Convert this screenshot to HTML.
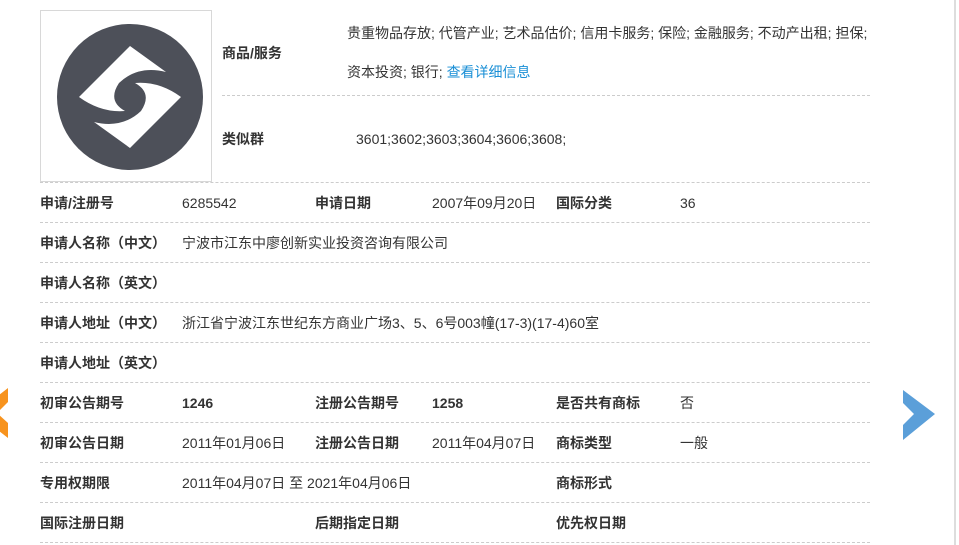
<!DOCTYPE html>
<html><head><meta charset="utf-8"><style>
body{margin:0;width:959px;height:545px;background:#fff;position:relative;overflow:hidden;font-family:"Liberation Sans","Noto Sans CJK SC",sans-serif;font-size:14px;color:#333}
.a{position:absolute;white-space:nowrap;line-height:16px}
.b{font-weight:bold}
.l{position:absolute;left:40px;width:830px;border-top:1px dashed #ccc;height:0}
</style></head><body>
<div style="position:absolute;left:954px;top:0;width:2px;height:545px;background:#ddd"></div>
<div style="position:absolute;left:40px;top:10px;width:170px;height:170px;border:1px solid #d8d8d8"></div>
<svg style="position:absolute;left:41px;top:11px" width="170" height="170" viewBox="0 0 170 170">
<circle cx="89" cy="86" r="73" fill="#4d5059"/>
<path d="M38 86 L89 35 L125 61 Q97 54 78 72 Q66 90 84 100 Q60 102 38 86Z" fill="#fff"/>
<path d="M140 86 L89 137 L53 111 Q81 118 100 100 Q112 82 94 72 Q118 70 140 86Z" fill="#fff"/>
</svg>
<div class="a b" style="left:222px;top:45px">商品/服务</div>
<div class="a" style="left:347px;top:25px">贵重物品存放; 代管产业; 艺术品估价; 信用卡服务; 保险; 金融服务; 不动产出租; 担保;</div>
<div class="a" style="left:347px;top:64px">资本投资; 银行; <span style="color:#1a8fd6">查看详细信息</span></div>
<div class="l" style="left:222px;width:648px;top:95px"></div>
<div class="a b" style="left:222px;top:131px">类似群</div>
<div class="a" style="left:356px;top:131px">3601;3602;3603;3604;3606;3608;</div>
<div class="l" style="top:182px"></div>
<div class="a b" style="left:40px;top:195px">申请/注册号</div><div class="a" style="left:182px;top:195px">6285542</div>
<div class="a b" style="left:315px;top:195px">申请日期</div><div class="a" style="left:432px;top:195px">2007年09月20日</div>
<div class="a b" style="left:556px;top:195px">国际分类</div><div class="a" style="left:680px;top:195px">36</div>
<div class="l" style="top:222px"></div>
<div class="a b" style="left:40px;top:235px">申请人名称（中文）</div><div class="a" style="left:182px;top:235px">宁波市江东中廖创新实业投资咨询有限公司</div>
<div class="l" style="top:262px"></div>
<div class="a b" style="left:40px;top:275px">申请人名称（英文）</div>
<div class="l" style="top:302px"></div>
<div class="a b" style="left:40px;top:315px">申请人地址（中文）</div><div class="a" style="left:182px;top:315px">浙江省宁波江东世纪东方商业广场3、5、6号003幢(17-3)(17-4)60室</div>
<div class="l" style="top:342px"></div>
<div class="a b" style="left:40px;top:355px">申请人地址（英文）</div>
<div class="l" style="top:382px"></div>
<div class="a b" style="left:40px;top:395px">初审公告期号</div><div class="a b" style="left:182px;top:395px">1246</div>
<div class="a b" style="left:315px;top:395px">注册公告期号</div><div class="a b" style="left:432px;top:395px">1258</div>
<div class="a b" style="left:556px;top:395px">是否共有商标</div><div class="a" style="left:680px;top:395px">否</div>
<div class="l" style="top:422px"></div>
<div class="a b" style="left:40px;top:435px">初审公告日期</div><div class="a" style="left:182px;top:435px">2011年01月06日</div>
<div class="a b" style="left:315px;top:435px">注册公告日期</div><div class="a" style="left:432px;top:435px">2011年04月07日</div>
<div class="a b" style="left:556px;top:435px">商标类型</div><div class="a" style="left:680px;top:435px">一般</div>
<div class="l" style="top:462px"></div>
<div class="a b" style="left:40px;top:475px">专用权期限</div><div class="a" style="left:182px;top:475px">2011年04月07日 至 2021年04月06日</div>
<div class="a b" style="left:556px;top:475px">商标形式</div>
<div class="l" style="top:502px"></div>
<div class="a b" style="left:40px;top:515px">国际注册日期</div>
<div class="a b" style="left:315px;top:515px">后期指定日期</div>
<div class="a b" style="left:556px;top:515px">优先权日期</div>
<div class="l" style="top:542px"></div>
<svg style="position:absolute;left:0;top:385px" width="10" height="55"><polygon points="8,3 -24,28 8,53 8,38 -3,28 8,17" fill="#f7931e"/></svg>
<svg style="position:absolute;left:900px;top:385px" width="40" height="60"><polygon points="3,5 35,29 3,55 3,40 14,29 3,18" fill="#5b9fd9"/></svg>
</body></html>
